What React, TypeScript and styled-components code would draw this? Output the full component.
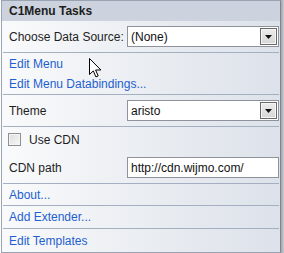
import React from "react";
import styled, { createGlobalStyle } from "styled-components";

const GlobalStyle = createGlobalStyle`
  html, body {
    margin: 0;
    padding: 0;
    background: #ffffff;
  }
  body {
    font-family: "Liberation Sans", Arial, sans-serif;
    font-size: 12px;
  }
`;

const Frame = styled.div`
  position: relative;
  width: 284px;
  height: 253px;
  display: flex;
  overflow: hidden;
`;

const Panel = styled.div`
  margin-left: 1px;
  width: 280px;
  height: 253px;
  box-sizing: border-box;
  border: 1px solid #9aa3b2;
  border-right-color: #7d8594;
  background: linear-gradient(to right, #f9fafb 0%, #eceff3 45%, #dde2ea 100%);
  display: flex;
  flex-direction: column;
`;

const Shade = styled.div`
  width: 3px;
  height: 253px;
  background: linear-gradient(to right, #a2a6ad, #c9cbcf);
`;

const Header = styled.div`
  height: 20px;
  flex: none;
  display: flex;
  align-items: center;
  padding-left: 7px;
  background: #ccd3de;
  color: #1c1c1c;
  font-weight: bold;
`;

const Row = styled.div<{ $h: number }>`
  height: ${(p) => p.$h}px;
  flex: none;
  display: grid;
  grid-template-columns: 1fr 152px;
  align-items: center;
  padding: 0 1px 0 7px;
  color: #1e1e1e;
`;

const CheckRow = styled.div<{ $h: number }>`
  height: ${(p) => p.$h}px;
  flex: none;
  display: flex;
  align-items: center;
  gap: 8px;
  padding-left: 6px;
  color: #1e1e1e;
`;

const Box = styled.span`
  width: 11px;
  height: 11px;
  border: 1px solid #8f8f8f;
  background: linear-gradient(135deg, #dcdcdc, #f8f8f8);
  box-shadow: inset 0 0 0 1px #f4f4f4;
`;

const Separator = styled.div`
  height: 1px;
  flex: none;
  margin: 0 1px;
  background: #a4afc1;
`;

const LinkRow = styled.a<{ $h: number }>`
  height: ${(p) => p.$h}px;
  flex: none;
  display: flex;
  align-items: center;
  padding-left: 7px;
  color: #1f5fd0;
  text-decoration: none;
`;

const Field = styled.div`
  height: 21px;
  box-sizing: border-box;
  border: 1px solid #8d929b;
  background: #ffffff;
  display: flex;
  align-items: center;
  padding-left: 3px;
  color: #111111;
`;

const FieldText = styled.span`
  flex: 1;
`;

const DropButton = styled.span`
  width: 17px;
  height: 17px;
  margin-right: 1px;
  box-sizing: border-box;
  border: 1px solid #6a6a6a;
  background: linear-gradient(#ececec, #d6d6d6);
  box-shadow: inset 0 0 0 1px #f6f6f6;
  display: flex;
  align-items: center;
  justify-content: center;
`;

const Cursor = styled.svg`
  position: absolute;
  left: 89px;
  top: 58px;
`;

function Select({ value }: { value: string }) {
  return (
    <Field>
      <FieldText>{value}</FieldText>
      <DropButton>
        <svg width="7" height="4" viewBox="0 0 7 4">
          <path d="M0 0h7L3.5 4z" fill="#111" />
        </svg>
      </DropButton>
    </Field>
  );
}

export default function App() {
  return (
    <>
      <GlobalStyle />
      <Frame>
        <Panel>
          <Header>C1Menu Tasks</Header>
          <Row $h={31}>
            <span>Choose Data Source:</span>
            <Select value="(None)" />
          </Row>
          <Separator />
          <LinkRow $h={21}>Edit Menu</LinkRow>
          <LinkRow $h={20}>Edit Menu Databindings...</LinkRow>
          <Separator />
          <Row $h={31}>
            <span>Theme</span>
            <Select value="aristo" />
          </Row>
          <Separator />
          <CheckRow $h={25}>
            <Box />
            <span>Use CDN</span>
          </CheckRow>
          <Row $h={31}>
            <span>CDN path</span>
            <Field>
              <FieldText>http://cdn.wijmo.com/</FieldText>
            </Field>
          </Row>
          <Separator />
          <LinkRow $h={21}>About...</LinkRow>
          <Separator />
          <LinkRow $h={22}>Add Extender...</LinkRow>
          <Separator />
          <LinkRow $h={23}>Edit Templates</LinkRow>
        </Panel>
        <Shade />
        <Cursor width="13" height="20" viewBox="0 0 13 20">
          <path
            d="M0.5 0.5v16l3.8-3.6 2.6 6 2.3-1-2.6-5.9h5.3z"
            fill="#fff"
            stroke="#000"
            strokeWidth="1"
            strokeLinejoin="miter"
          />
        </Cursor>
      </Frame>
    </>
  );
}
